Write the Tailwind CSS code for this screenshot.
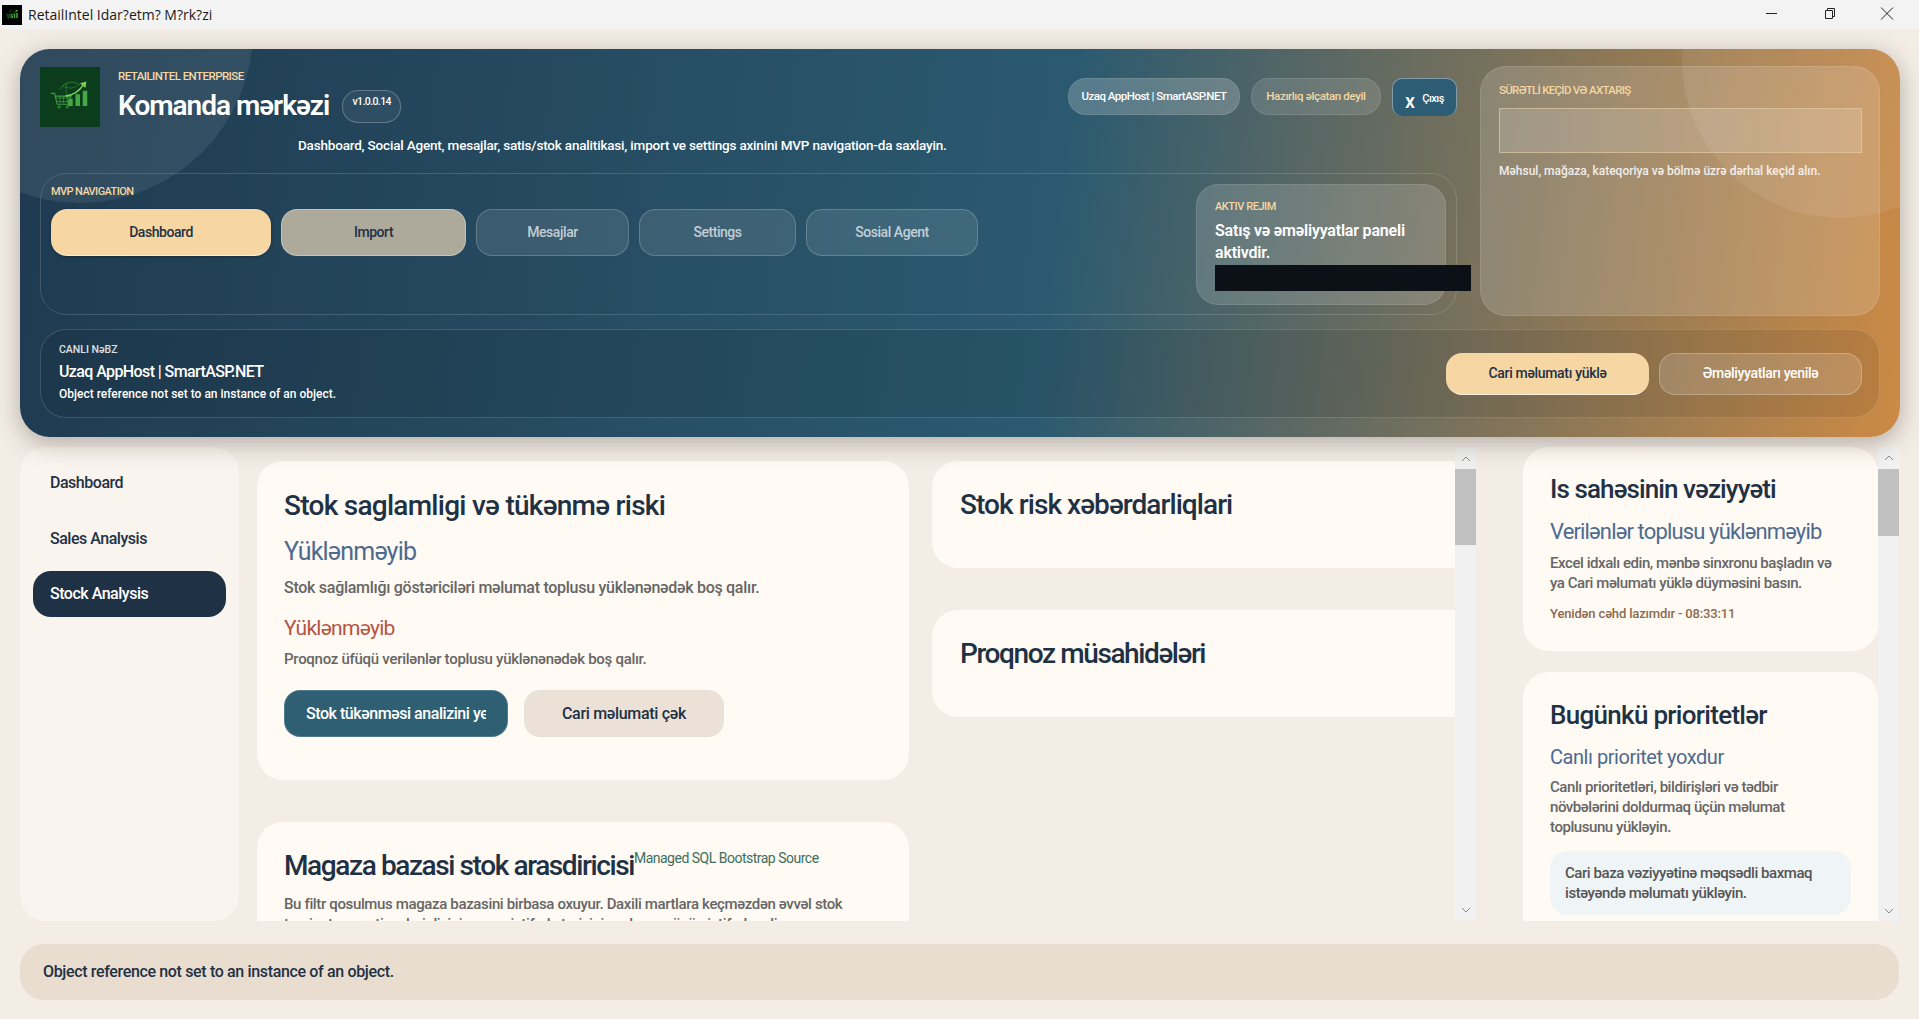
<!DOCTYPE html>
<html lang="az">
<head>
<meta charset="UTF-8">
<title>RetailIntel Idar?etm? M?rk?zi</title>
<script src="https://cdn.jsdelivr.net/npm/@tailwindcss/browser@4"></script>
</head>
<body class="w-[1919px] h-[1019px] overflow-hidden bg-[#f3ede6] font-[Roboto,sans-serif] text-[#1f3144] flex flex-col">

<svg class="hidden">
  <symbol id="logo" viewBox="-3 -1 66 66">
    <g fill="none" stroke="#3f9a40" stroke-width="1">
      <path d="M19 24a14 14 0 0 1 22-5" stroke-opacity=".7"/>
      <path d="M22 20c6 3 12 3 17-1M27 16c-2 5-2 10 0 14" stroke-opacity=".6"/>
      <path d="M9 28h4l3 12h13l2-9H14" stroke-width="1.3"/>
      <path d="M15 33h15M16 37h13M19 31v8M23 31v8M27 31v8" stroke-width=".8"/>
      <circle cx="18" cy="43" r="1.3"/><circle cx="27" cy="43" r="1.3"/>
    </g>
    <path d="M28 42v-8h5v8zM36 42V29h5v13zM44 42V25h5v17z" fill="#46a845"/>
    <path d="M25 31c8-1 15-5 20-13" fill="none" stroke="#7fd158" stroke-width="1.6"/>
    <path d="M41 17l7-2-1 7z" fill="#7fd158"/>
  </symbol>
  <symbol id="up" viewBox="0 0 10 6"><path d="M1 5l4-4 4 4" fill="none" stroke="#8a8a8a" stroke-width="1"/></symbol>
  <symbol id="down" viewBox="0 0 10 6"><path d="M1 1l4 4 4-4" fill="none" stroke="#8a8a8a" stroke-width="1"/></symbol>
</svg>

<!-- title bar -->
<div class="h-[29px] shrink-0 bg-[#f3f3f3] flex items-center pl-[2px]">
  <div class="w-[20px] h-[20px] bg-black"><svg class="w-[20px] h-[20px]"><use href="#logo"/></svg></div>
  <span class="ml-[6px] text-[14px] text-[#1a1a1a] font-['Open_Sans',sans-serif]">RetailIntel Idar?etm? M?rk?zi</span>
  <div class="ml-auto mr-[3px] flex items-center">
    <svg class="w-[58px] h-[29px]" viewBox="0 0 58 29"><path d="M24 13.5h11" stroke="#222" fill="none"/></svg>
    <svg class="w-[58px] h-[29px]" viewBox="0 0 58 29"><path d="M25.5 10.5h7v8h-7zM27.5 10.5v-2h7v8h-2" stroke="#222" fill="none"/></svg>
    <svg class="w-[58px] h-[29px]" viewBox="0 0 58 29"><path d="M23 7.5l12 12M35 7.5l-12 12" stroke="#222" fill="none"/></svg>
  </div>
</div>

<!-- hero -->
<section class="relative overflow-hidden shrink-0 mt-[20px] ml-[20px] w-[1880px] h-[388px] rounded-[30px] pl-[20px] pr-[20px] pt-[17px] text-white shadow-[0_6px_24px_rgba(60,50,40,0.35)] bg-[linear-gradient(97deg,#1f3a50_0%,#2b5a70_55%,#cc8a45_100%)]">
  <div class="absolute left-[-113px] top-[-192px] w-[346px] h-[346px] rounded-full bg-white/8"></div>
  <div class="absolute left-[1662px] top-[-147px] w-[316px] h-[316px] rounded-full bg-white/8"></div>

  <div class="relative flex gap-[23px] h-[250px]">
    <div class="w-[1417px] flex flex-col">
      <div class="h-[107px] shrink-0">
        <div class="flex justify-between">
          <div class="flex mt-[1px]">
            <div class="w-[60px] h-[60px] bg-[#0b3d1c]"><svg class="w-[60px] h-[60px]"><use href="#logo"/></svg></div>
            <div class="ml-[18px]">
              <div class="text-[11.5px] leading-[18px] font-medium text-[#f5d7a3] tracking-[-0.55px]">RETAILINTEL ENTERPRISE</div>
              <div class="flex items-center mt-[3px]">
                <h1 class="text-[28px] leading-[36px] font-semibold tracking-[-1px]">Komanda mərkəzi</h1>
                <span class="ml-[13px] w-[59px] h-[33px] rounded-[16px] border border-white/25 bg-white/5 text-[10.5px] font-medium tracking-[-0.6px] flex justify-center pt-[3px]">v1.0.0.14</span>
              </div>
            </div>
          </div>
          <div class="flex gap-[11px] mt-[12px] text-[11.5px] font-medium tracking-[-0.5px]">
            <span class="w-[172px] h-[37px] rounded-[18px] bg-white/20 border border-white/10 flex items-center justify-center">Uzaq AppHost | SmartASP.NET</span>
            <span class="w-[130px] h-[37px] rounded-[18px] bg-white/12 border border-white/10 flex items-center justify-center text-[#f5d7a3] tracking-[-0.35px]">Hazırlıq əlçatan deyil</span>
            <span class="w-[65px] h-[38px] rounded-[10px] bg-[#2d5d74] border-t border-x border-white/40 flex items-center justify-center gap-[8px] pt-[5px]"><b class="text-[15px] mt-[6px]">X</b><span class="text-[11px] -mt-[2px]">Çıxış</span></span>
          </div>
        </div>
        <p class="ml-[258px] mt-[8px] text-[13.5px] leading-[20px] font-medium tracking-[-0.19px] whitespace-nowrap">Dashboard, Social Agent, mesajlar, satis/stok analitikasi, import ve settings axinini MVP navigation-da saxlayin.</p>
      </div>

      <div class="h-[142px] shrink-0 rounded-[26px] border border-white/15 flex justify-between pl-[10px] pr-[10px] pt-[10px]">
        <div>
          <div class="text-[11px] leading-[16px] font-medium text-[#f5d7a3] tracking-[-0.6px]">MVP NAVIGATION</div>
          <div class="flex gap-[10px] mt-[9px] text-[14px] font-medium tracking-[-0.45px]">
            <span class="w-[220px] h-[47px] rounded-[16px] bg-[#f6d6a3] text-[#1f3144] border-b border-white/60 flex items-center justify-center shadow-[0_1px_3px_rgba(0,0,0,0.3)]">Dashboard</span>
            <span class="w-[185px] h-[47px] rounded-[16px] bg-[#adaa9b] text-[#1f3144] border border-white/30 flex items-center justify-center">Import</span>
            <span class="w-[153px] h-[47px] rounded-[16px] bg-white/10 text-white/70 border border-white/20 flex items-center justify-center">Mesajlar</span>
            <span class="w-[157px] h-[47px] rounded-[16px] bg-white/10 text-white/70 border border-white/20 flex items-center justify-center">Settings</span>
            <span class="w-[172px] h-[47px] rounded-[16px] bg-white/10 text-white/70 border border-white/20 flex items-center justify-center">Sosial Agent</span>
          </div>
        </div>
        <div class="w-[250px] h-[121px] rounded-[22px] bg-white/15 border border-white/10 pl-[18px] pt-[14px]">
          <div class="text-[11px] leading-[16px] font-medium text-[#f5d7a3] tracking-[-0.45px]">AKTIV REJIM</div>
          <div class="mt-[5px] text-[16px] leading-[22px] font-semibold tracking-[-0.2px]">Satış və əməliyyatlar paneli aktivdir.</div>
          <div class="w-[256px] h-[26px] mt-[1px] bg-[#0b1117]"></div>
        </div>
      </div>
    </div>

    <div class="w-[400px] rounded-[26px] bg-white/15 border border-white/10 pl-[18px] pr-[17px] pt-[15px]">
      <div class="text-[11.5px] leading-[16px] font-medium text-[#f5d7a3] tracking-[-0.7px]">SÜRƏTLİ KEÇİD VƏ AXTARIŞ</div>
      <div class="h-[45px] mt-[10px] bg-white/15 border border-[#e3c79c]/70"></div>
      <p class="mt-[10px] text-[12px] leading-[16px] font-medium text-white/85">Məhsul, mağaza, kateqoriya və bölmə üzrə dərhal keçid alın.</p>
    </div>
  </div>

  <div class="relative mt-[13px] h-[89px] rounded-[26px] bg-black/8 border border-white/15 flex items-center justify-between pl-[18px] pr-[17px]">
    <div class="-mt-[3px]">
      <div class="text-[10.5px] leading-[14px] font-medium text-white/85">CANLI NəBZ</div>
      <div class="mt-[4px] text-[16px] leading-[22px] font-medium tracking-[-0.6px]">Uzaq AppHost | SmartASP.NET</div>
      <div class="mt-[3px] text-[12px] leading-[16px] font-medium">Object reference not set to an instance of an object.</div>
    </div>
    <div class="flex gap-[10px] text-[14px] font-medium tracking-[-0.32px]">
      <span class="w-[203px] h-[42px] rounded-[16px] bg-[#f6d6a3] text-[#1f3144] border-b border-white/60 flex items-center justify-center">Cari məlumatı yüklə</span>
      <span class="w-[203px] h-[42px] rounded-[16px] bg-white/15 border border-white/25 flex items-center justify-center">Əməliyyatları yenilə</span>
    </div>
  </div>
</section>

<!-- workspace -->
<div class="flex shrink-0 ml-[20px] mt-[10px] h-[474px]">
  <nav class="w-[219px] rounded-[26px] bg-[#f9f4ee] px-[13px] pt-[12px] text-[16px] font-medium tracking-[-0.48px]">
    <div class="h-[48px] pl-[17px] flex items-center">Dashboard</div>
    <div class="h-[46px] mt-[9px] pl-[17px] flex items-center">Sales Analysis</div>
    <div class="h-[46px] mt-[9px] pl-[17px] flex items-center rounded-[18px] bg-[#1f3144] text-white">Stock Analysis</div>
  </nav>

  <div class="ml-[18px] w-[1219px] flex">
    <div class="w-[1198px] overflow-hidden flex gap-[23px] pt-[14px]">
      <div class="w-[652px] shrink-0 flex flex-col gap-[42px]">
        <div class="h-[319px] shrink-0 rounded-[26px] bg-[#fffaf3] pl-[27px] pt-[27px]">
          <h2 class="text-[28px] leading-[36px] font-medium tracking-[-0.73px]">Stok saglamligi və tükənmə riski</h2>
          <div class="mt-[11px] text-[25px] leading-[34px] text-[#4d6a8f] tracking-[-0.8px]">Yüklənməyib</div>
          <div class="mt-[9px] text-[16px] leading-[20px] font-medium text-[#666] tracking-[-0.28px]">Stok sağlamlığı göstəriciləri məlumat toplusu yüklənənədək boş qalır.</div>
          <div class="mt-[16px] text-[21px] leading-[28px] text-[#b5533f] tracking-[-0.7px]">Yüklənməyib</div>
          <div class="mt-[8px] text-[15px] leading-[18px] font-medium text-[#666] tracking-[-0.28px]">Proqnoz üfüqü verilənlər toplusu yüklənənədək boş qalır.</div>
          <div class="flex gap-[16px] mt-[22px] text-[16px] font-medium tracking-[-0.3px]">
            <div class="w-[224px] h-[47px] rounded-[16px] bg-[#2f5f72] border border-[#6d95a3]/50 text-white pl-[21px] pr-[21px] flex items-center tracking-[-0.45px]"><span class="block overflow-hidden whitespace-nowrap">Stok tükənməsi analizini yenilə</span></div>
            <div class="w-[200px] h-[47px] rounded-[16px] bg-[#ebe1d6] flex items-center justify-center">Cari məlumati çək</div>
          </div>
        </div>
        <div class="h-[200px] shrink-0 rounded-[26px] bg-[#fffaf3] pl-[27px] pt-[26px]">
          <div class="flex items-start">
            <h2 class="text-[28px] leading-[36px] font-medium whitespace-nowrap tracking-[-1.4px]">Magaza bazasi stok arasdiricisi</h2>
            <span class="text-[14px] leading-[18px] mt-[1px] text-[#3e6f5e] whitespace-nowrap tracking-[-0.5px]">Managed SQL Bootstrap Source</span>
          </div>
          <p class="mt-[10px] w-[590px] text-[15px] leading-[20px] font-medium text-[#666] tracking-[-0.36px]">Bu filtr qosulmus magaza bazasini birbasa oxuyur. Daxili martlara keçməzdən əvvəl stok təminatını, partiya dərinliyini və son istifadə tarixini yoxlamaq üçün istifadə edin.</p>
        </div>
      </div>
      <div class="w-[600px] shrink-0 flex flex-col gap-[42px]">
        <div class="h-[107px] rounded-[26px] bg-[#fffaf3] pl-[28px] pt-[26px]"><h2 class="text-[28px] leading-[36px] font-medium tracking-[-0.93px]">Stok risk xəbərdarliqlari</h2></div>
        <div class="h-[107px] rounded-[26px] bg-[#fffaf3] pl-[28px] pt-[26px]"><h2 class="text-[28px] leading-[36px] font-medium tracking-[-1.4px]">Proqnoz müsahidələri</h2></div>
      </div>
    </div>
    <div class="w-[21px] bg-[#f1f1f1] flex flex-col items-center h-[472px] mt-[1px]">
      <svg class="w-[10px] h-[6px] mt-[8px]"><use href="#up"/></svg>
      <div class="w-full h-[76px] mt-[7px] bg-[#c1c1c1]"></div>
      <svg class="w-[10px] h-[6px] mt-auto mb-[7px]"><use href="#down"/></svg>
    </div>
  </div>

  <div class="ml-[47px] w-[376px] flex">
    <div class="w-[355px] overflow-hidden flex flex-col gap-[21px]">
      <div class="h-[204px] shrink-0 rounded-[26px] bg-[#fffaf3] pl-[27px] pr-[27px] pt-[25px]">
        <h2 class="text-[26px] leading-[34px] font-medium tracking-[-0.9px]">Is sahəsinin vəziyyəti</h2>
        <div class="mt-[12px] text-[22px] leading-[28px] text-[#4d6a8f] tracking-[-0.85px]">Verilənlər toplusu yüklənməyib</div>
        <p class="mt-[7px] text-[15px] leading-[20px] font-medium text-[#666] tracking-[-0.44px]">Excel idxalı edin, mənbə sinxronu başladın və<br>ya Cari məlumatı yüklə düyməsini basın.</p>
        <div class="mt-[12px] text-[13px] leading-[18px] font-medium text-[#8a6a4f] tracking-[-0.15px]">Yenidən cəhd lazımdır - 08:33:11</div>
      </div>
      <div class="h-[300px] shrink-0 rounded-[26px] bg-[#fffaf3] pl-[27px] pr-[27px] pt-[26px]">
        <h2 class="text-[26px] leading-[34px] font-medium tracking-[-0.7px]">Bugünkü prioritetlər</h2>
        <div class="mt-[12px] text-[20px] leading-[26px] text-[#4d6a8f] tracking-[-0.45px]">Canlı prioritet yoxdur</div>
        <p class="mt-[7px] text-[15px] leading-[20px] font-medium text-[#666] tracking-[-0.44px]">Canlı prioritetləri, bildirişləri və tədbir<br>növbələrini doldurmaq üçün məlumat<br>toplusunu yükləyin.</p>
        <div class="mt-[14px] h-[64px] rounded-[18px] bg-[#eff4f7] px-[15px] pt-[12px] text-[15px] leading-[20px] font-medium text-[#555] tracking-[-0.44px]">Cari baza vəziyyətinə məqsədli baxmaq<br>istəyəndə məlumatı yükləyin.</div>
      </div>
    </div>
    <div class="w-[21px] bg-[#f1f1f1] flex flex-col items-center">
      <svg class="w-[10px] h-[6px] mt-[8px]"><use href="#up"/></svg>
      <div class="w-full h-[67px] mt-[8px] bg-[#c1c1c1]"></div>
      <svg class="w-[10px] h-[6px] mt-auto mb-[7px]"><use href="#down"/></svg>
    </div>
  </div>
</div>

<!-- status -->
<div class="shrink-0 ml-[20px] mt-[23px] w-[1879px] h-[56px] rounded-[24px] bg-[#e9ddd0] pl-[23px] flex items-center text-[16px] font-medium tracking-[-0.35px]">Object reference not set to an instance of an object.</div>

</body>
</html>
